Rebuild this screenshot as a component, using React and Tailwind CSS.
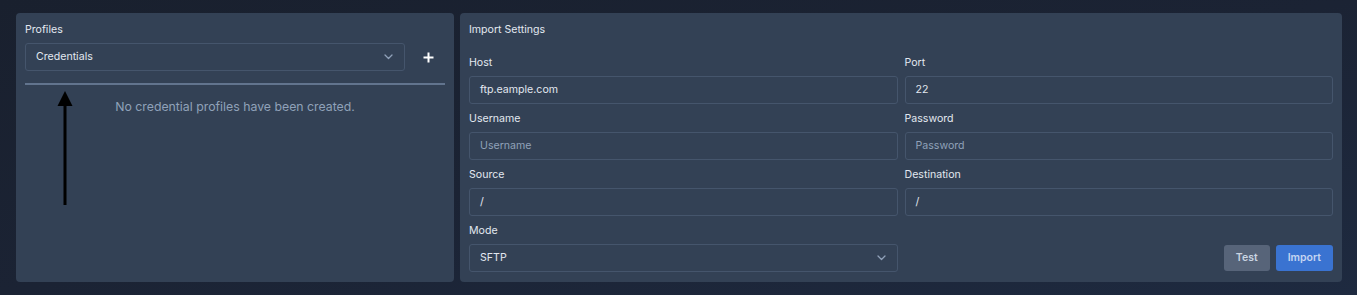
import React from 'react';

function Chevron() {
  return (
    <svg width="9" height="6" viewBox="0 0 9 6" fill="none" className="text-slate-400">
      <path d="M1 1l3.5 3.5L8 1" stroke="currentColor" strokeWidth="1.3" strokeLinecap="round" strokeLinejoin="round" />
    </svg>
  );
}

function Field({ label, value, placeholder }) {
  return (
    <div className="flex flex-col gap-[6px]">
      <label className="text-[10.6px] leading-[17px] -mb-[1px] text-slate-200">{label}</label>
      <div className="h-[28px] rounded-[3px] border border-slate-600 px-[10px] flex items-center text-[10.6px]">
        {value ? <span className="text-slate-200">{value}</span> : <span className="text-slate-400">{placeholder}</span>}
      </div>
    </div>
  );
}

export default function App() {
  return (
    <div
      className="h-[295px] w-full flex gap-[6px] pl-[16px] pr-[15px] pt-[13px] pb-[13px] bg-gradient-to-br from-[#19202e] via-[#1b2334] to-[#1e2a40]"
      style={{ fontFamily: 'Inter, "Noto Sans", sans-serif' }}
    >
      {/* profiles */}
      <div className="relative w-[438px] h-[269px] rounded-[4px] bg-[#334155] px-[9px] pt-[9px]">
        <div className="text-[10.6px] leading-[15px] text-slate-200">Profiles</div>
        <div className="mt-[6px] flex items-center gap-[6px]">
          <div className="flex-1 h-[28px] rounded-[3px] border border-slate-600 pl-[10px] pr-[11px] flex items-center justify-between text-[10.6px] text-slate-200">
            <span>Credentials</span>
            <Chevron />
          </div>
          <button className="w-[34px] h-[28px] flex items-center justify-center text-white">
            <svg width="11" height="11" viewBox="0 0 11 11">
              <path d="M5.5 0.5v10M0.5 5.5h10" stroke="currentColor" strokeWidth="2" />
            </svg>
          </button>
        </div>
        <div className="mt-[12px] h-[2px] bg-slate-500" />
        <div className="mt-[14px] text-center text-[12.3px] leading-[16px] text-slate-400">
          No credential profiles have been created.
        </div>
        <svg className="absolute left-[40px] top-[78px]" width="18" height="114" viewBox="0 0 18 114">
          <path d="M9 0L16.5 15H1.5Z" fill="#000" />
          <rect x="7.5" y="12" width="3" height="102" fill="#000" />
        </svg>
      </div>

      {/* import settings */}
      <div className="flex-1 h-[269px] rounded-[4px] bg-[#334155] px-[9px] pt-[9px] pb-[10px] flex flex-col">
        <div className="text-[10.6px] leading-[15px] text-slate-200">Import Settings</div>
        <div className="mt-[17px] grid grid-cols-2 gap-x-[7px] gap-y-[6px]">
          <Field label="Host" value="ftp.eample.com" />
          <Field label="Port" value="22" />
          <Field label="Username" placeholder="Username" />
          <Field label="Password" placeholder="Password" />
          <Field label="Source" value="/" />
          <Field label="Destination" value="/" />
          <div className="flex flex-col gap-[6px]">
            <label className="text-[10.6px] leading-[17px] -mb-[1px] text-slate-200">Mode</label>
            <div className="h-[28px] rounded-[3px] border border-slate-600 pl-[10px] pr-[11px] flex items-center justify-between text-[10.6px] text-slate-200">
              <span>SFTP</span>
              <Chevron />
            </div>
          </div>
          <div className="flex items-end justify-end gap-[6px] pb-[1px]">
            <button className="h-[26px] px-[12px] rounded-[3px] bg-[#576479] text-[10.5px] font-semibold text-slate-300">Test</button>
            <button className="h-[26px] px-[12px] rounded-[3px] bg-[#3a73d1] text-[10.5px] font-semibold text-[#c4d5f2]">Import</button>
          </div>
        </div>
      </div>
    </div>
  );
}
